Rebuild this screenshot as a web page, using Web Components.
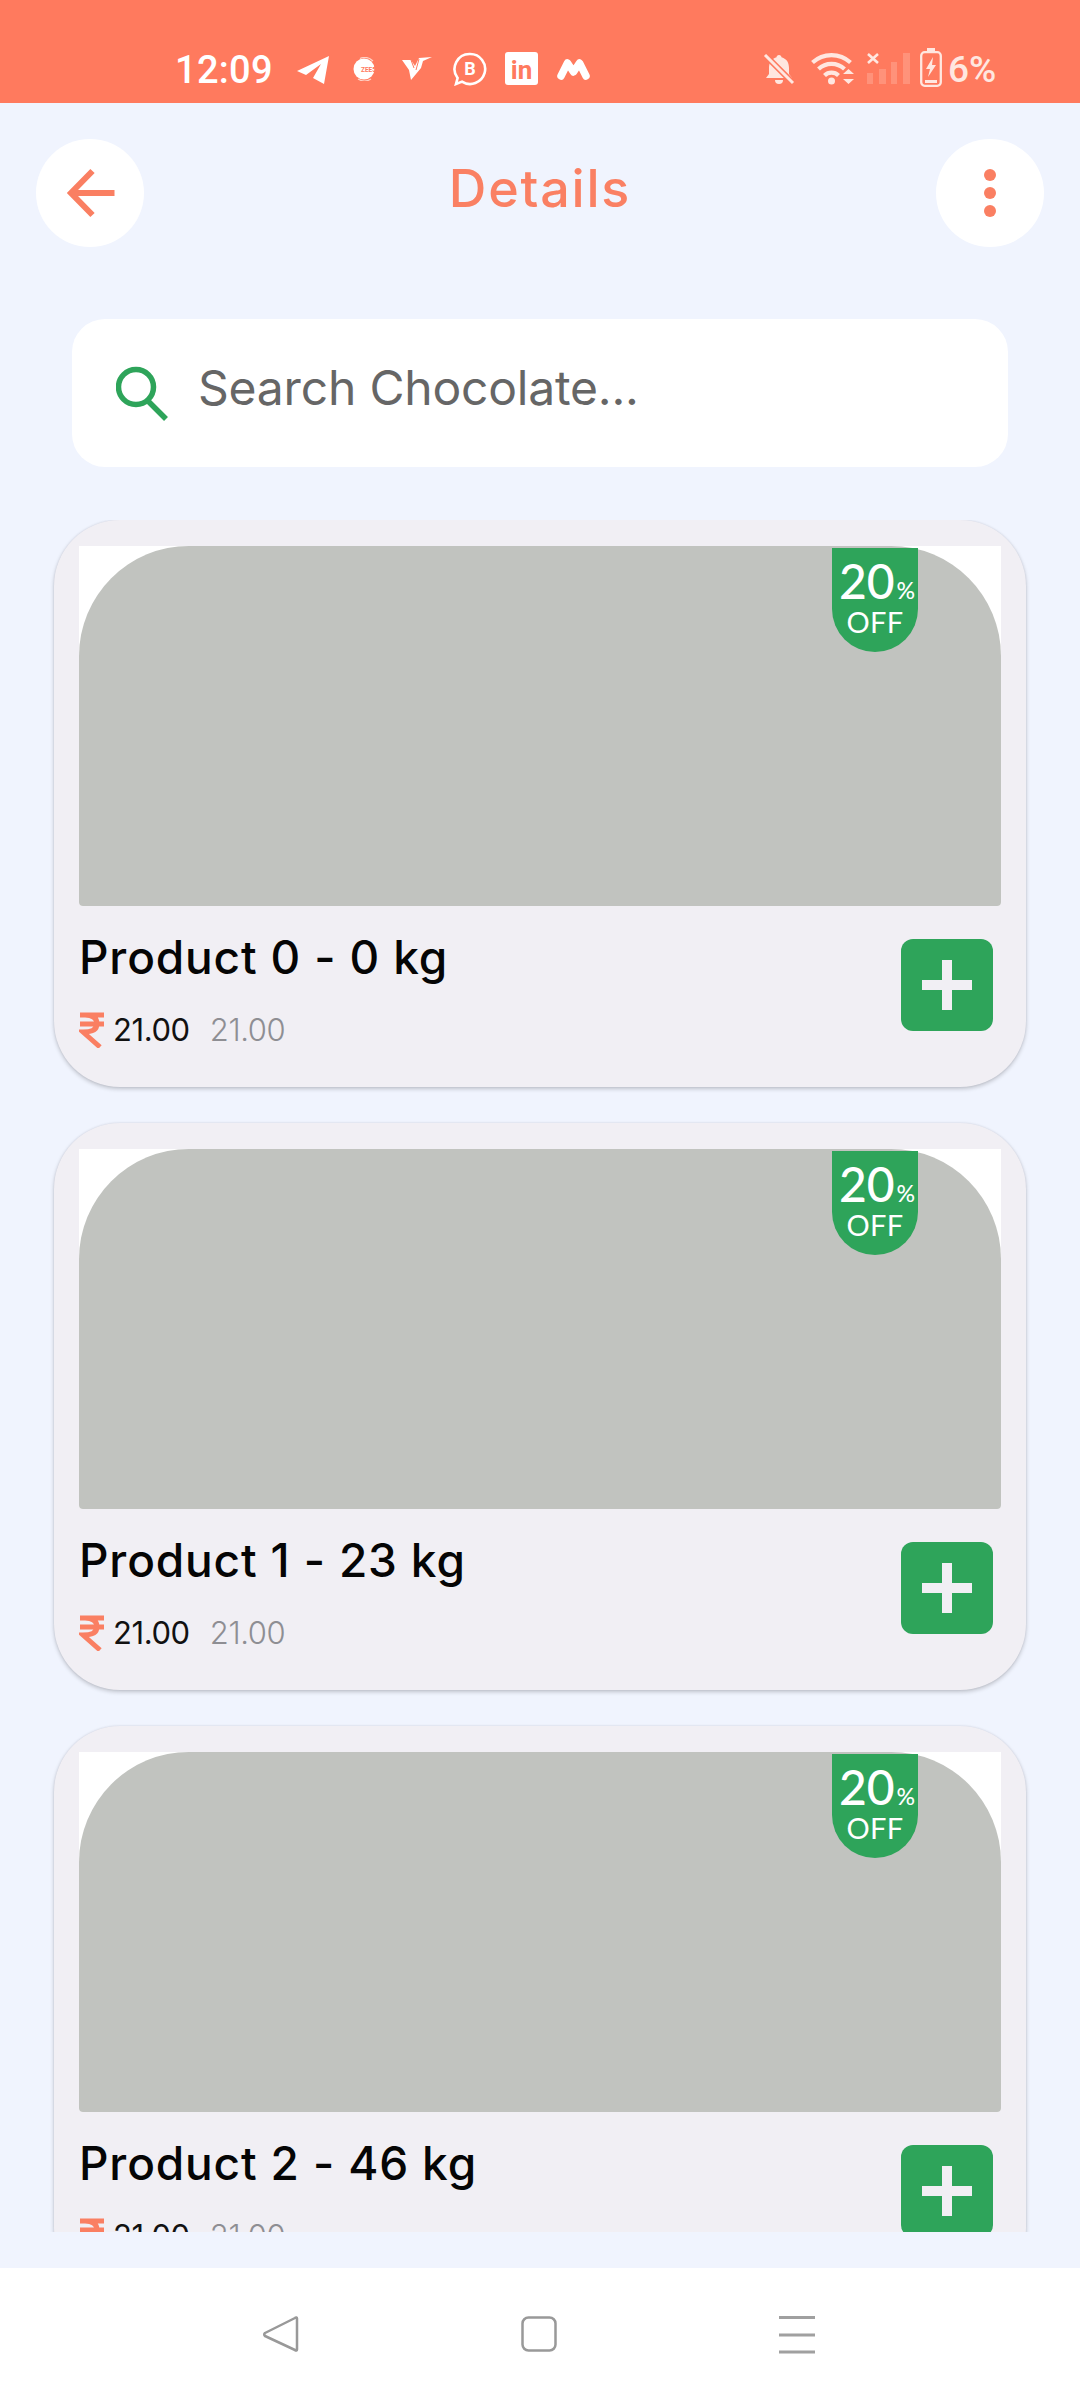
<!DOCTYPE html>
<html><head><meta charset="utf-8"><style>
html,body{margin:0;padding:0;background:#F0F4FE}
body{width:1080px;height:2400px;font-family:Inter,"Liberation Sans",sans-serif}
app-shell{height:2400px}
</style></head><body>
<app-shell>
  <status-bar slot="status"></status-bar>
  <top-bar slot="top" title-text="Details"></top-bar>
  <search-box slot="top" placeholder="Search Chocolate..."></search-box>
  <product-card name="Product 0 - 0 kg"></product-card>
  <product-card name="Product 1 - 23 kg"></product-card>
  <product-card name="Product 2 - 46 kg"></product-card>
  <nav-bar slot="nav"></nav-bar>
</app-shell>
<script>
function def(name, html, init){
  customElements.define(name, class extends HTMLElement{
    connectedCallback(){
      if(this.shadowRoot) return;
      const r=this.attachShadow({mode:'open'});
      r.innerHTML=html;
      if(init) init(this,r);
    }
  });
}
def('app-shell',`<style>
:host{display:flex;flex-direction:column;width:1080px;background:#F0F4FE;overflow:hidden}
.list{height:1712px;margin-top:53px;padding:0 54px;display:flex;flex-direction:column;gap:36px;overflow:hidden;flex:none}
.spacer{height:36px;flex:none}
</style>
<slot name="status"></slot><slot name="top"></slot>
<div class="list"><slot></slot></div>
<div class="spacer"></div>
<slot name="nav"></slot>`);

def('status-bar',`<style>
:host{display:flex;align-items:flex-start;height:103px;background:#FF7A5E;color:#fff;flex:none;font-family:Roboto,sans-serif}
.time{font-size:38px;line-height:38px;margin:51px 0 0 175px;width:122px;letter-spacing:.3px;font-weight:500}
.right{display:flex;align-items:flex-start;color:#FFE7E0;margin-left:173px}
svg{display:block;flex:none}
.pct{font-size:37px;line-height:38px;margin:51px 0 0 6px;font-weight:500}
</style>
<span class="time">12:09</span>
<svg style="margin-top:56px" width="32" height="28" viewBox="0 0 32 28"><path fill="#fff" d="M0 15 32 0 27 28 16 22 24 8 9 19Z"/></svg>
<svg style="margin:57px 0 0 23px" width="26" height="24" viewBox="0 0 26 24"><circle cx="12" cy="12" r="10.5" fill="#fff"/><path d="M8 1.5A12 12 0 0 1 21 4M6 22a12 12 0 0 0 13 0" stroke="#FFD3C7" stroke-width="1.2" fill="none"/><text x="9" y="14.5" font-size="6.5" font-weight="700" font-family="Roboto" fill="#FF7A5E">ZEE5</text></svg>
<svg style="margin:56px 0 0 23px" width="32" height="25" viewBox="0 0 32 25"><path fill="#fff" d="M1 4 10 4 14 10 18 2 31 1 22 5 20 12 10 24 8 14Z"/><path d="M10 4 13 12M18 3 15 14" stroke="#FF7A5E" stroke-width="1" fill="none"/></svg>
<svg style="margin:52px 0 0 20px" width="34" height="34" viewBox="0 0 34 34"><path d="M17 2a15 15 0 1 1-8 27.6L3 32l1.6-6A15 15 0 0 1 17 2Z" fill="none" stroke="#fff" stroke-width="2.6"/><text x="17" y="23" text-anchor="middle" font-size="18" font-weight="700" font-family="Roboto" fill="#fff">B</text></svg>
<svg style="margin:52px 0 0 18px" width="33" height="33" viewBox="0 0 33 33"><rect width="33" height="33" rx="3" fill="#fff"/><text x="16.5" y="27" text-anchor="middle" font-size="26" font-weight="700" font-family="Roboto" fill="#FF7A5E">in</text></svg>
<svg style="margin:58px 0 0 19px" width="33" height="22" viewBox="0 0 33 22"><path d="M4 18 10.500 5 16.500 14 22.500 5 29 18" fill="none" stroke="#fff" stroke-width="7.500" stroke-linecap="round" stroke-linejoin="round"/></svg>
<div class="right">
<svg style="margin-top:54px" width="32" height="31" viewBox="0 0 32 31"><path fill="currentColor" d="M16 1c1.500 0 2.500 1 2.500 2.300C24 5 26 9 26 14v6l3 4H3l3-4v-6c0-5 2-9 7.500-10.700C13.500 2 14.500 1 16 1Z"/><path fill="currentColor" d="M12 26h8a4 4 0 0 1-8 0Z"/><path d="M2 1 30 29" stroke="#FF7A5E" stroke-width="6"/><path d="M2 1 30 29" stroke="currentColor" stroke-width="3"/></svg>
<svg style="margin:51px 0 0 16px" width="44" height="34" viewBox="0 0 44 34"><g fill="none" stroke="currentColor" stroke-width="4.200"><path d="M1.500 11.500a28 28 0 0 1 38 0"/><path d="M7.500 18a19 19 0 0 1 26 0"/><path d="M13.500 24.500a10 10 0 0 1 14 0"/></g><circle cx="20.500" cy="30" r="3.500" fill="currentColor"/><path fill="currentColor" d="M37.500 18 43 23H32ZM37.500 33 43 28H32Z"/></svg>
<svg style="margin:53px 0 0 11px" width="44" height="31" viewBox="0 0 44 31"><path d="M2 1 12 10M12 1 2 10" stroke="currentColor" stroke-width="2.600"/><g fill="currentColor" opacity=".22"><rect x="1" y="20" width="6" height="11"/><rect x="13" y="16" width="7" height="15"/><rect x="25" y="9" width="6" height="22"/><rect x="37" y="0" width="7" height="31"/></g></svg>
<svg style="margin:48px 0 0 10px" width="22" height="39" viewBox="0 0 22 39"><path fill="currentColor" d="M7 0h8v3H7z"/><rect x="1.200" y="4.200" width="19.600" height="33.600" rx="3.500" fill="none" stroke="currentColor" stroke-width="2.300"/><path fill="currentColor" d="M13 9 6 21h4l-2 8 8-12h-4zM5 32h12v3H5z"/></svg>
<span class="pct">6%</span>
</div>`);

def('top-bar',`<style>
:host{display:flex;align-items:center;justify-content:space-between;padding:36px 36px 0;flex:none}
.c{width:108px;height:108px;border-radius:50%;background:#fff;display:flex;align-items:center;justify-content:center}
h1{margin:0 0 9px;font-size:52px;font-weight:500;color:#FA8063;letter-spacing:1.8px;line-height:1}
svg{display:block}
</style>
<div class="c"><svg width="54" height="54" viewBox="0 0 54 54"><path d="M9 27H51.500M29.500 5 8 27 29.500 49" fill="none" stroke="#FA7F62" stroke-width="6"/></svg></div>
<h1></h1>
<div class="c"><svg width="16" height="52" viewBox="0 0 16 52"><circle cx="8" cy="8" r="6" fill="#FA7F62"/><circle cx="8" cy="26" r="6" fill="#FA7F62"/><circle cx="8" cy="44" r="6" fill="#FA7F62"/></svg></div>`,
(h,r)=>{r.querySelector('h1').textContent=h.getAttribute('title-text')});

def('search-box',`<style>
:host{display:flex;align-items:center;height:148px;margin:72px 72px 0;padding:0 0 0 44px;background:#fff;border-radius:33px;flex:none;box-sizing:border-box}
svg{display:block;flex:none;margin:0 27px 0 0}
span{font-size:48px;color:#666;line-height:1;letter-spacing:-.2px;margin-bottom:11px}
</style>
<svg width="55" height="55" viewBox="0 0 55 55"><circle cx="20" cy="21" r="17.500" fill="none" stroke="#2EA45A" stroke-width="5.500"/><path d="M32 35 50 53" stroke="#2EA45A" stroke-width="5.500"/></svg>
<span></span>`,(h,r)=>{r.querySelector('span').textContent=h.getAttribute('placeholder')});

def('product-card',`<style>
:host{display:block;width:972px;height:567px;flex:none;box-sizing:border-box;background:#F1EFF4;border-radius:66px;padding:26px 25px 0;box-shadow:0 2px 4px rgba(0,0,0,.2),0 0 2px rgba(60,60,90,.12)}
.img{position:relative;height:360px;width:922px;background:#fff;border-radius:0 0 4px 4px}
.ph{height:360px;background:#C1C3BF;border-radius:110px 110px 4px 4px}
.badge{position:absolute;top:2px;left:753px;width:86px;height:104px;box-sizing:border-box;background:#2EA45A;border-radius:0 0 43px 43px;color:#fff;display:flex;flex-direction:column;align-items:center;padding-top:11px;font-family:Lato,sans-serif}
.n{font-size:48px;line-height:44px;font-weight:500;display:flex;align-items:baseline;margin-left:4px}
.n small{font-size:23px;margin-left:2px}
.off{font-size:29px;line-height:28px;letter-spacing:.3px;margin-top:-4px}
.info{display:flex;justify-content:space-between;padding-right:8px}
.t{padding-top:24px}
h2{margin:0;font-size:46px;line-height:54px;font-weight:500;color:#050505;letter-spacing:.85px}
.price{display:flex;align-items:center;margin-top:28px;font-size:31px;line-height:36px;letter-spacing:-.4px}
.price svg{display:block;margin-right:8px}
.now{color:#111;font-weight:400}
.was{color:#8E8E93;margin-left:20px;font-weight:300}
.add{width:92px;height:92px;margin-top:33px;border-radius:12px;background:#2EA45A;display:flex;align-items:center;justify-content:center}
</style>
<div class="img"><div class="ph"></div><div class="badge"><div class="n">20<small>%</small></div><div class="off">OFF</div></div></div>
<div class="info"><div class="t"><h2></h2>
<div class="price"><svg width="26" height="36" viewBox="0 0 26 36"><path d="M1 3H25M1 12H25M6 3C15 3 18 7 18 12 18 17 14 20 4 20L21 35" fill="none" stroke="#FA7F62" stroke-width="5"/></svg><span class="now">21.00</span><span class="was">21.00</span></div></div>
<div class="add"><svg width="50" height="50" viewBox="0 0 50 50"><path d="M20 0H30V20H50V30H30V50H20V30H0V20H20Z" fill="#F1EFF4"/></svg></div></div>`,
(h,r)=>{r.querySelector('h2').textContent=h.getAttribute('name')});

def('nav-bar',`<style>
:host{display:flex;align-items:flex-start;height:132px;background:#fff;flex:none;padding:48px 0 0 262px;box-sizing:border-box}
svg{display:block;flex:none}
</style>
<svg width="38" height="36" viewBox="0 0 38 36"><path d="M35 2.500C35 1.500 34 1 33 2L3 17c-1 1-1 2 0 3l30 14c1 1 2 .5 2-.5Z" fill="none" stroke="#999" stroke-width="2.500" stroke-linejoin="round"/></svg>
<svg style="margin-left:221px" width="36" height="36" viewBox="0 0 36 36"><rect x="1.500" y="1.500" width="33" height="33" rx="6" fill="none" stroke="#999" stroke-width="2.500"/></svg>
<svg style="margin-left:222px" width="36" height="38" viewBox="0 0 36 38"><path d="M0 1.500H36M0 19H36M0 36H36" stroke="#A0A0A0" stroke-width="3"/></svg>`);
</script>
</body></html>
